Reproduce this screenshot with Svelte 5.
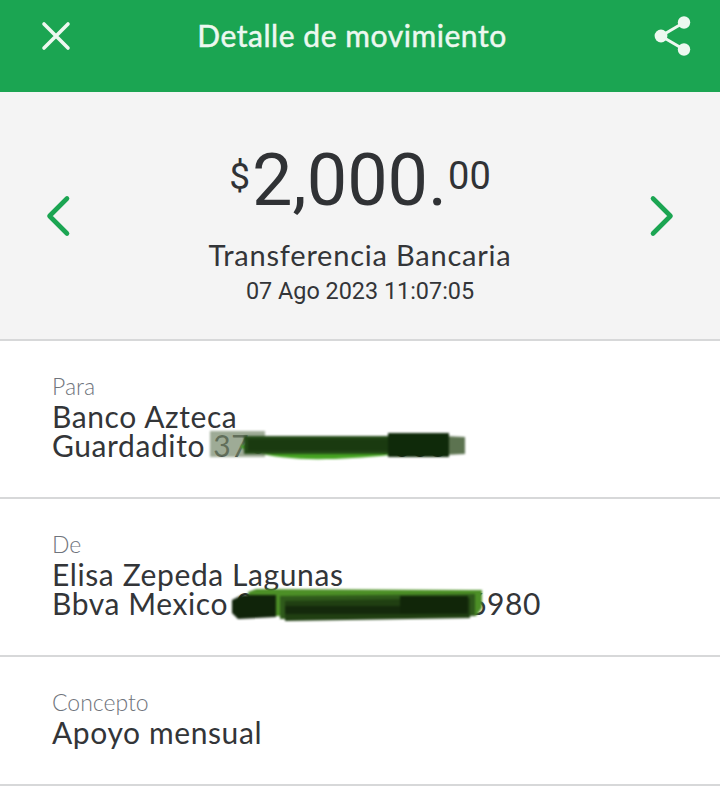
<script>
  const rows = [
    { label: 'Para', lines: ['Banco Azteca', 'Guardadito 37••••••••003'], mark: 'para' },
    { label: 'De', lines: ['Elisa Zepeda Lagunas', 'Bbva Mexico 0••••• ••• •••6980'], mark: 'de' },
    { label: 'Concepto', lines: ['Apoyo mensual'] }
  ];
</script>

<div class="screen">
  <header class="topbar">
    <button class="icon-btn" aria-label="Cerrar">
      <svg width="30" height="30" viewBox="0 0 30 30" fill="none"><path d="M3 3L27 27M27 3L3 27" stroke="#edf8f0" stroke-width="3.6" stroke-linecap="round"/></svg>
    </button>
    <h1>Detalle de movimiento</h1>
    <button class="icon-btn" aria-label="Compartir">
      <svg width="40" height="42" viewBox="0 0 40 42" fill="none">
        <path d="M31 7.5L8 21L31 34.5" stroke="#edf8f0" stroke-width="3"/>
        <circle cx="31" cy="7.5" r="6.2" fill="#edf8f0"/>
        <circle cx="8" cy="21" r="6.4" fill="#edf8f0"/>
        <circle cx="31" cy="34.5" r="6.2" fill="#edf8f0"/>
      </svg>
    </button>
  </header>

  <section class="summary">
    <button class="arrow" aria-label="Anterior">
      <svg width="26" height="42" viewBox="0 0 26 42" fill="none"><path d="M21 3.5L3.5 21L21 38.5" stroke="#1ba552" stroke-width="4.6" stroke-linecap="round" stroke-linejoin="round"/></svg>
    </button>
    <div class="info">
      <div class="amount"><span class="cur">$</span><span class="int">2,000.</span><span class="dec">00</span></div>
      <div class="kind">Transferencia Bancaria</div>
      <div class="date">07 Ago 2023 11:07:05</div>
    </div>
    <button class="arrow" aria-label="Siguiente">
      <svg width="26" height="42" viewBox="0 0 26 42" fill="none"><path d="M5 3.5L22.5 21L5 38.5" stroke="#1ba552" stroke-width="4.6" stroke-linecap="round" stroke-linejoin="round"/></svg>
    </button>
  </section>

  {#each rows as row}
    <section class="row">
      <div class="label">{row.label}</div>
      <div class="value">
        {#each row.lines as line}
          <div>{line}</div>
        {/each}
        {#if row.mark === 'para'}
          <svg class="mark mark-para" width="260" height="32" viewBox="0 0 260 32" fill="none">
            <path d="M2 0H57V26H2Z" fill="#75876a" opacity=".7"/>
            <path d="M236 5L257 6V23L236 24Z" fill="#5c7350"/>
            <path d="M33 17C70 31 120 30 182 24V14H33Z" fill="#45a321"/>
            <path d="M36 5H240V23H36Z" fill="#234a17"/>
            <path d="M40 8H190V20H40Z" fill="#1a3a10"/>
            <path d="M180 2H241V26H180Z" fill="#0f2a0a"/>
          </svg>
        {:else if row.mark === 'de'}
          <svg class="mark mark-de" width="260" height="36" viewBox="0 0 260 36" fill="none">
            <path d="M18 6L26 3L240 4L252 4V22L246 30H20Z" fill="#4c8f26"/>
            <path d="M50 10L245 8V30L50 33Z" fill="#2f5a1b"/>
            <path d="M2 14L12 9H46V31L8 33L2 27Z" fill="#10240a"/>
            <path d="M55 15L240 12V32L55 35Z" fill="#203f12"/>
            <path d="M55 20H238V28H55Z" fill="#14290c"/>
            <path d="M170 10H238V26L170 28Z" fill="#112609"/>
          </svg>
        {/if}
      </div>
    </section>
  {/each}
</div>

<style>
  :global(body){
    margin:0;
    background:#fff;
  }

  .screen{
    width:720px;
    height:791px;
    overflow:hidden;
    font-family:Lato, "Open Sans", sans-serif;
    color:#333538;
  }

  button{
    border:0;
    padding:0;
    background:none;
    display:flex;
    align-items:center;
    justify-content:center;
  }

  .topbar{
    height:92px;
    background:#1ba552;
    display:grid;
    grid-template-columns:112px 1fr 112px;
    align-items:center;
    padding-bottom:20px;
    box-sizing:border-box;
  }
  .topbar h1{
    margin:0;
    text-align:center;
    font-size:30px;
    font-weight:400;
    -webkit-text-stroke:.5px #edf8f0;
    letter-spacing:.55px;
    line-height:34px;
    color:#edf8f0;
    transform:translate(-8px,-1px);
    white-space:nowrap;
  }
  .icon-btn{ width:112px; height:44px; }
  .topbar .icon-btn:last-child{ justify-content:flex-end; padding-right:27px; box-sizing:border-box; }

  .summary{
    height:249px;
    box-sizing:border-box;
    background:#f4f4f4;
    border-bottom:2px solid #d7d8d9;
    display:grid;
    grid-template-columns:1fr auto 1fr;
    align-items:center;
    padding:0 44px;
  }
  .summary .arrow{ width:30px; height:44px; }
  .summary .arrow:last-child{ justify-self:end; }

  .info{
    text-align:center;
    display:flex;
    flex-direction:column;
    align-items:center;
    padding-top:17px;
  }
  .amount{
    display:flex;
    align-items:flex-start;
    font-family:Roboto, sans-serif;
    color:#303235;
    height:82px;
  }
  .cur{ font-size:37px; line-height:48px; margin-top:13px; margin-right:2px; }
  .int{ font-size:72px; line-height:82px; font-weight:400; }
  .dec{ font-size:38px; line-height:48px; margin-top:12px; margin-left:1px; }
  .kind{
    font-family:Lato, sans-serif;
    font-size:29px;
    line-height:36px;
    margin-top:15px;
    letter-spacing:.78px;
  }
  .date{
    font-family:Roboto, sans-serif;
    font-size:23.4px;
    line-height:36px;
  }

  .row{
    padding:31px 52px 0;
    box-sizing:border-box;
    height:158px;
    border-bottom:2px solid #d7d8d9;
  }
  .row:last-child{ height:129px; }
  .label{
    font-size:23px;
    line-height:28px;
    font-weight:300;
    color:#6f747c;
  }
  .value{
    position:relative;
    font-size:30px;
    line-height:29px;
    letter-spacing:.6px;
    margin-top:2px;
    white-space:nowrap;
  }
  .mark{ position:absolute; filter:blur(.8px); }
  .mark-para{ left:156px; top:29px; }
  .mark-de{ left:178px; top:26px; }
</style>
